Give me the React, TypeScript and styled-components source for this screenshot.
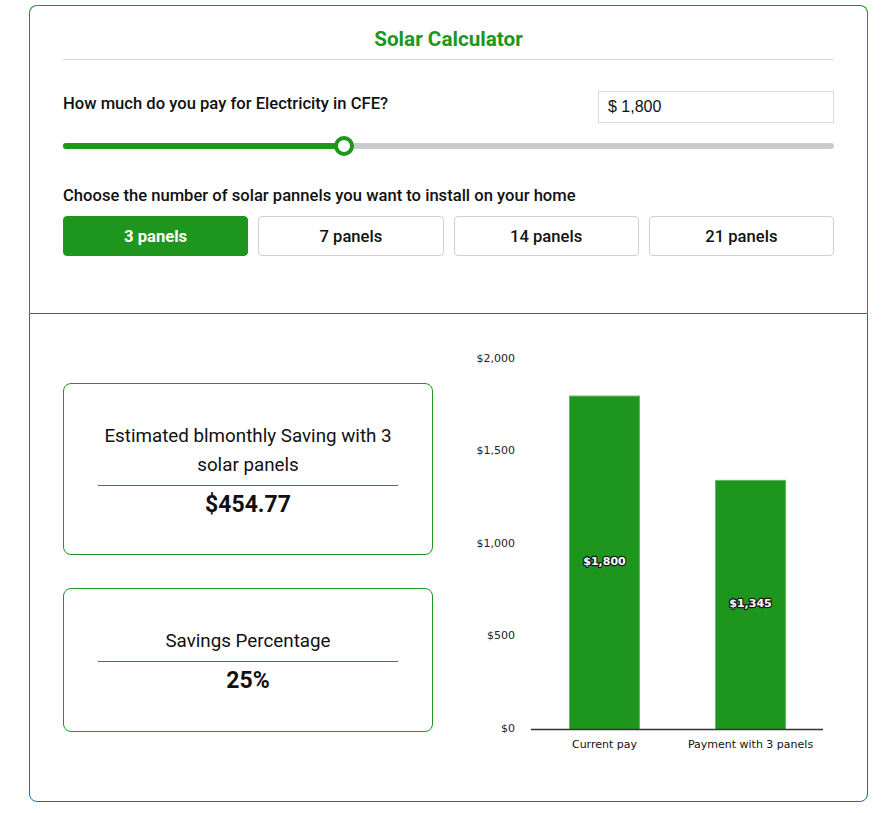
import React, { useState } from "react";
import styled, { createGlobalStyle } from "styled-components";

const GREEN = "#1e961e";
const BLUE = "#1f6c9c";

const Global = createGlobalStyle`
  html, body { margin: 0; padding: 0; background: #fff; }
  body { font-family: Roboto, "Liberation Sans", sans-serif; color: #111; }
  * { box-sizing: border-box; }
`;

const Page = styled.div`
  width: 839px;
  margin: 5px 0 12px 29px;
`;

const TopCard = styled.section`
  border: 1px solid ${GREEN};
  border-bottom: none;
  border-radius: 8px 8px 0 0;
  padding: 21px 33px 57px;
`;

const Title = styled.h1`
  margin: 0;
  font-size: 20.7px;
  line-height: 24px;
  font-weight: 700;
  color: ${GREEN};
  text-align: center;
  padding-bottom: 8px;
  border-bottom: 1px solid #d8d8d8;
`;

const QuestionRow = styled.div`
  display: flex;
  justify-content: space-between;
  align-items: flex-start;
  margin-top: 31px;
`;

const Label = styled.div`
  font-size: 16.6px;
  line-height: 24px;
  font-weight: 500;
  color: #111;
`;

const QuestionLabel = styled(Label)`
  margin-top: 1px;
`;

const AmountInput = styled.input`
  width: 236px;
  height: 32px;
  border: 1px solid #d9d9d9;
  padding: 0 9px;
  font-family: "Liberation Sans", Arial, sans-serif;
  font-size: 16px;
  color: #111;
  outline: none;
`;

const SliderWrap = styled.div`
  position: relative;
  height: 20px;
  margin-top: 13px;
  display: flex;
  align-items: center;
`;

const Track = styled.div`
  width: 100%;
  height: 6px;
  border-radius: 3px;
  background: #cbcbcb;
  position: relative;
`;

const Fill = styled.div`
  height: 100%;
  border-radius: 3px;
  background: ${GREEN};
`;

const Thumb = styled.div`
  position: absolute;
  top: 50%;
  width: 20px;
  height: 20px;
  margin: -10px 0 0 -10px;
  border-radius: 50%;
  background: #fff;
  border: 4px solid ${GREEN};
`;

const ChooseLabel = styled(Label)`
  margin-top: 28px;
`;

const ButtonGrid = styled.div`
  display: grid;
  grid-template-columns: repeat(4, 1fr);
  gap: 10px;
  margin-top: 8px;
`;

const PanelButton = styled.button<{ $active?: boolean }>`
  height: 40px;
  border-radius: 4px;
  border: 1px solid ${(p) => (p.$active ? GREEN : "#cfcfcf")};
  background: ${(p) => (p.$active ? GREEN : "#fff")};
  color: ${(p) => (p.$active ? "#fff" : "#111")};
  font-family: Roboto, "Liberation Sans", sans-serif;
  font-size: 16.6px;
  font-weight: ${(p) => (p.$active ? 700 : 500)};
  cursor: pointer;
`;

const BottomCard = styled.section`
  border: 1px solid ${BLUE};
  border-radius: 0 0 8px 8px;
  padding: 0 33px;
  display: grid;
  grid-template-columns: 370px 1fr;
`;

const Stats = styled.div`
  display: flex;
  flex-direction: column;
  gap: 33px;
  padding: 69px 0;
`;

const StatCard = styled.div<{ $h: number }>`
  height: ${(p) => p.$h}px;
  border: 1px solid ${GREEN};
  border-radius: 8px;
  padding-top: 5px;
  display: flex;
  flex-direction: column;
  align-items: center;
  justify-content: center;
`;

const StatLabel = styled.div`
  width: 300px;
  text-align: center;
  font-size: 18.8px;
  line-height: 29px;
  font-weight: 400;
  color: #111;
  padding-bottom: 5px;
  border-bottom: 1px solid ${GREEN};
`;

const StatValue = styled.div`
  margin-top: 2px;
  font-size: 23px;
  line-height: 34px;
  font-weight: 700;
  color: #111;
`;

const ChartBox = styled.div`
  display: flex;
`;

const ChartSvg = styled.svg`
  display: block;
  font-family: "DejaVu Sans", Verdana, sans-serif;
`;

const ticks = [0, 500, 1000, 1500, 2000];
const zeroY = 415;
const scale = 370.5 / 2000;

const fmt = (n: number) => "$" + n.toLocaleString("en-US");

function Chart({ current, after }: { current: number; after: number }) {
  const bars = [
    { x: 136, v: current, label: "Current pay" },
    { x: 282, v: after, label: "Payment with 3 panels" },
  ];
  return (
    <ChartSvg width={400} height={487} viewBox="0 0 400 487">
      {ticks.map((t) => (
        <text
          key={t}
          x={82}
          y={zeroY - t * scale}
          textAnchor="end"
          dominantBaseline="middle"
          fontSize={11}
          fill="#222"
        >
          {fmt(t)}
        </text>
      ))}
      {bars.map((b) => {
        const h = b.v * scale;
        return (
          <g key={b.label}>
            <rect
              x={b.x + 0.5}
              y={zeroY - h + 0.5}
              width={70}
              height={h}
              fill={GREEN}
              stroke="#66b866"
              strokeWidth={1}
            />
            <text
              x={b.x + 35.5}
              y={zeroY - h / 2}
              textAnchor="middle"
              dominantBaseline="middle"
              fontSize={11}
              fontWeight={700}
              fill="#fff"
              stroke="#1a1a1a"
              strokeWidth={2.5}
              paintOrder="stroke"
              strokeLinejoin="round"
            >
              {fmt(b.v)}
            </text>
            <text
              x={b.x + 35.5}
              y={431}
              textAnchor="middle"
              dominantBaseline="middle"
              fontSize={11}
              fill="#111"
            >
              {b.label}
            </text>
          </g>
        );
      })}
      <line x1={98} x2={390} y1={zeroY + 0.5} y2={zeroY + 0.5} stroke="#333" strokeWidth={1.5} />
    </ChartSvg>
  );
}

export default function App() {
  const [panels, setPanels] = useState(3);
  const pct = 36.5;
  return (
    <Page>
      <Global />
      <TopCard>
        <Title>Solar Calculator</Title>
        <QuestionRow>
          <QuestionLabel>How much do you pay for Electricity in CFE?</QuestionLabel>
          <AmountInput defaultValue="$ 1,800" />
        </QuestionRow>
        <SliderWrap>
          <Track>
            <Fill style={{ width: `${pct}%` }} />
          </Track>
          <Thumb style={{ left: `${pct}%` }} />
        </SliderWrap>
        <ChooseLabel>Choose the number of solar pannels you want to install on your home</ChooseLabel>
        <ButtonGrid>
          {[3, 7, 14, 21].map((n) => (
            <PanelButton key={n} $active={panels === n} onClick={() => setPanels(n)}>
              {n} panels
            </PanelButton>
          ))}
        </ButtonGrid>
      </TopCard>
      <BottomCard>
        <Stats>
          <StatCard $h={172}>
            <StatLabel>Estimated blmonthly Saving with 3 solar panels</StatLabel>
            <StatValue>$454.77</StatValue>
          </StatCard>
          <StatCard $h={144}>
            <StatLabel>Savings Percentage</StatLabel>
            <StatValue>25%</StatValue>
          </StatCard>
        </Stats>
        <ChartBox>
          <Chart current={1800} after={1345} />
        </ChartBox>
      </BottomCard>
    </Page>
  );
}
